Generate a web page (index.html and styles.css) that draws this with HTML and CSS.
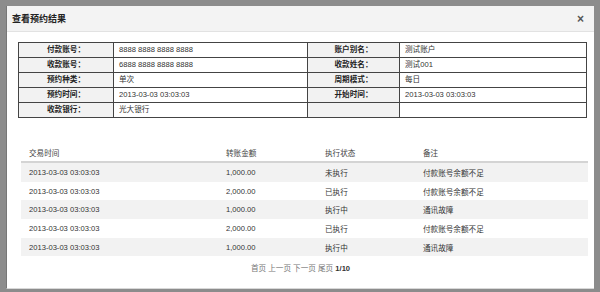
FILE: index.html
```html
<!DOCTYPE html>
<html lang="zh-CN">
<head>
<meta charset="utf-8">
<title>查看预约结果</title>
<link rel="stylesheet" href="styles.css">
</head>
<body>
<div class="frame">
  <div class="dialog">
    <div class="header">
      <span class="title">查看预约结果</span>
      <span class="close">×</span>
    </div>
    <table class="info">
      <colgroup><col class="c1"><col class="c2"><col class="c3"><col class="c4"></colgroup>
      <tr><th>付款账号：</th><td>8888 8888 8888 8888</td><th>账户别名：</th><td>测试账户</td></tr>
      <tr><th>收款账号：</th><td>6888 8888 8888 8888</td><th>收款姓名：</th><td>测试001</td></tr>
      <tr><th>预约种类：</th><td>单次</td><th>周期模式：</th><td>每日</td></tr>
      <tr><th>预约时间：</th><td>2013-03-03 03:03:03</td><th>开始时间：</th><td>2013-03-03 03:03:03</td></tr>
      <tr><th>收款银行：</th><td>光大银行</td><th></th><td></td></tr>
    </table>
    <table class="list">
      <colgroup><col class="l1"><col class="l2"><col class="l3"><col class="l4"></colgroup>
      <thead>
        <tr><th>交易时间</th><th>转账金额</th><th>执行状态</th><th>备注</th></tr>
      </thead>
      <tbody>
        <tr class="alt"><td>2013-03-03 03:03:03</td><td>1,000.00</td><td>未执行</td><td>付款账号余额不足</td></tr>
        <tr><td>2013-03-03 03:03:03</td><td>2,000.00</td><td>已执行</td><td>付款账号余额不足</td></tr>
        <tr class="alt"><td>2013-03-03 03:03:03</td><td>1,000.00</td><td>执行中</td><td>通讯故障</td></tr>
        <tr><td>2013-03-03 03:03:03</td><td>2,000.00</td><td>已执行</td><td>付款账号余额不足</td></tr>
        <tr class="alt"><td>2013-03-03 03:03:03</td><td>1,000.00</td><td>执行中</td><td>通讯故障</td></tr>
      </tbody>
    </table>
    <div class="pager">首页 上一页 下一页 尾页 <b>1/10</b></div>
  </div>
</div>
</body>
</html>
```

FILE: styles.css
```css
html, body {
  margin: 0;
  padding: 0;
}
body {
  width: 600px;
  height: 292px;
  overflow: hidden;
  font-family: "Liberation Sans", "Noto Sans CJK SC", sans-serif;
  font-size: 7.6px;
  color: #333;
}
.frame {
  box-sizing: border-box;
  width: 600px;
  height: 292px;
  background: #8c8c8c;
  padding: 6px 6px 3px 6px;
}
.dialog {
  box-sizing: border-box;
  height: 100%;
  background: #fff;
  border-left: 1px solid #777;
  border-bottom: 1px solid #d8d8d8;
  display: flex;
  flex-direction: column;
}
.header {
  box-sizing: border-box;
  height: 26px;
  background: #f3f3f3;
  border-bottom: 1px solid #e2e2e2;
  display: flex;
  align-items: center;
  justify-content: space-between;
  padding: 0 10px 0 5px;
}
.title {
  font-size: 9px;
  font-weight: bold;
  color: #222;
}
.close {
  font-size: 12px;
  font-weight: bold;
  color: #555;
  line-height: 1;
}
.info {
  border-collapse: collapse;
  margin: 10px 0 0 11px;
  width: 568px;
  table-layout: fixed;
  border: 1px solid #333;
}
.info .c1 { width: 95px; }
.info .c2 { width: 194px; }
.info .c3 { width: 92px; }
.info .c4 { width: 187px; }
.info th, .info td {
  border: 1px solid #444;
  height: 14px;
  padding: 0;
  line-height: 14px;
}
.info th {
  background: #f2f2f2;
  font-weight: bold;
  color: #222;
  text-align: center;
}
.info td {
  padding-left: 5px;
  text-align: left;
}
.list {
  border-collapse: collapse;
  table-layout: fixed;
  width: 567px;
  margin: 25px 0 0 14px;
}
.list .l1 { width: 197px; }
.list .l2 { width: 99px; }
.list .l3 { width: 98px; }
.list .l4 { width: 173px; }
.list th, .list td {
  text-align: left;
  padding: 0 0 0 8px;
  font-weight: normal;
}
.list th {
  height: 18px;
  color: #444;
  border-bottom: 2px solid #d4d4d4;
}
.list td {
  height: 18.7px;
  color: #333;
}
.list tr.alt td {
  background: #f2f2f2;
}
.pager {
  margin-top: 6px;
  text-align: center;
  color: #777;
}
.pager b {
  color: #333;
}
```
